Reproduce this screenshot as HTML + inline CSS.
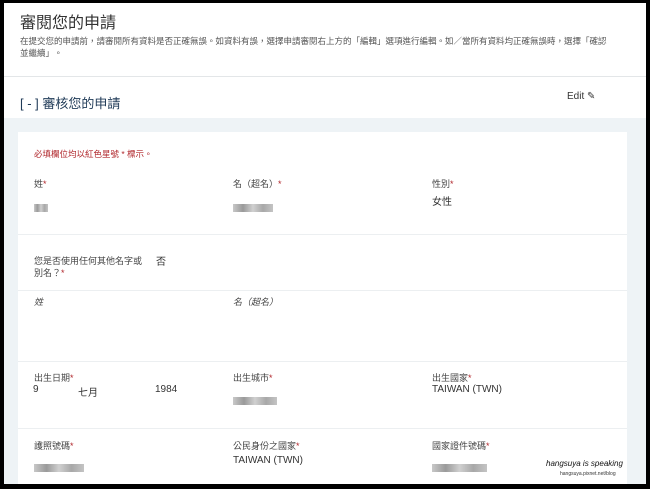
<!DOCTYPE html>
<html><head><meta charset="utf-8"><style>
*{margin:0;padding:0;box-sizing:border-box}
html,body{width:650px;height:489px;overflow:hidden;background:#000}
body{font-family:"Liberation Sans","Noto Sans CJK TC",sans-serif;color:#333;position:relative}
.frame{position:absolute;left:4px;top:3px;width:642px;height:481px;background:#fff;overflow:hidden}
.t{position:absolute;white-space:nowrap}
.blue{position:absolute;left:0;top:115px;width:642px;height:380px;background:#eef3f6}
.card{position:absolute;left:14px;top:129px;width:609px;height:360px;background:#fff}
.hr{position:absolute;left:14px;width:609px;height:1px;background:#eceff1}
.r{color:#b0262b}
.blur{position:absolute;height:8px;background:linear-gradient(90deg,#c8c8c8,#9a9a9a,#d0d0d0,#a8a8a8,#c4c4c4)}
.l{font-size:9px;color:#444}
.v{font-size:10px;color:#333}
</style></head><body>
<div class="frame">
<div class="t" style="left:16px;top:6px;font-size:16px;color:#333">審閱您的申請</div>
<div class="t" style="left:16px;top:32px;font-size:8.5px;color:#555">在提交您的申請前，請審閱所有資料是否正確無誤。如資料有誤，選擇申請審閱右上方的「編輯」選項進行編輯。如／當所有資料均正確無誤時，選擇「確認</div>
<div class="t" style="left:16px;top:44px;font-size:8.5px;color:#555">並繼續」。</div>
<div style="position:absolute;left:0;top:73px;width:642px;height:1px;background:#e3e6e8"></div>
<div class="t" style="left:16px;top:90px;font-size:13px;color:#1f3a57">[ - ] 審核您的申請</div>
<div class="t" style="left:563px;top:88px;font-size:10px;color:#333">Edit <span style="font-size:10px">✎</span></div>
<div class="blue"></div>
<div class="card"></div>
<div class="t r" style="left:30px;top:145px;font-size:8.5px">必填欄位均以紅色星號 * 標示。</div>
<div class="t l" style="left:30px;top:174px">姓<span class="r">*</span></div>
<div class="t l" style="left:229px;top:174px">名（超名）<span class="r">*</span></div>
<div class="t l" style="left:428px;top:174px">性別<span class="r">*</span></div>
<div class="t v" style="left:428px;top:190px">女性</div>
<div class="blur" style="left:30px;top:201px;width:14px"></div>
<div class="blur" style="left:229px;top:201px;width:40px"></div>
<div class="hr" style="top:231px"></div>
<div class="t l" style="left:30px;top:251px">您是否使用任何其他名字或</div>
<div class="t l" style="left:30px;top:263px">別名？<span class="r">*</span></div>
<div class="t v" style="left:152px;top:250px">否</div>
<div class="hr" style="top:287px"></div>
<div class="t l" style="left:30px;top:292px;font-style:italic">姓</div>
<div class="t l" style="left:229px;top:292px;font-style:italic">名（超名）</div>
<div class="hr" style="top:358px"></div>
<div class="t l" style="left:30px;top:368px">出生日期<span class="r">*</span></div>
<div class="t l" style="left:229px;top:368px">出生城市<span class="r">*</span></div>
<div class="t l" style="left:428px;top:368px">出生國家<span class="r">*</span></div>
<div class="t v" style="left:29px;top:381px">9</div>
<div class="t v" style="left:74px;top:381px">七月</div>
<div class="t v" style="left:151px;top:381px">1984</div>
<div class="t v" style="left:428px;top:381px">TAIWAN (TWN)</div>
<div class="blur" style="left:229px;top:394px;width:44px"></div>
<div class="hr" style="top:425px"></div>
<div class="t l" style="left:30px;top:436px">護照號碼<span class="r">*</span></div>
<div class="t l" style="left:229px;top:436px">公民身份之國家<span class="r">*</span></div>
<div class="t l" style="left:428px;top:436px">國家證件號碼<span class="r">*</span></div>
<div class="t v" style="left:229px;top:452px">TAIWAN (TWN)</div>
<div class="blur" style="left:30px;top:461px;width:50px"></div>
<div class="blur" style="left:428px;top:461px;width:55px"></div>
<div class="t" style="left:542px;top:456px;font-size:8px;font-style:italic;color:#111">hangsuya is speaking</div>
<div class="t" style="left:556px;top:468px;font-size:5px;color:#333">hangsuya.pixnet.net/blog</div>
</div>
</body></html>
